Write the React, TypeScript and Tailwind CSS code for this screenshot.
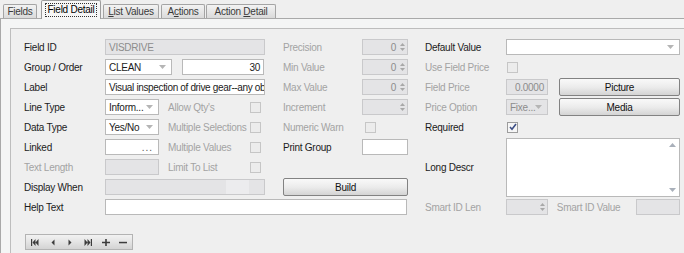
import type { ReactNode } from "react";

const font = { fontFamily: '"Liberation Sans", Arial, sans-serif' };

function Label({ children, off, className = "" }: { children: ReactNode; off?: boolean; className?: string }) {
  return (
    <div className={`flex items-center whitespace-nowrap ${off ? "text-[#a3a3a3]" : "text-[#1b1b1b]"} ${className}`}>
      {children}
    </div>
  );
}

function Arrow({ off }: { off?: boolean }) {
  return (
    <svg width="7" height="4" viewBox="0 0 7 4" className="shrink-0">
      <path d="M0 0h7L3.5 4z" fill={off ? "#b5b5b5" : "#8a8a8a"} />
    </svg>
  );
}

function Box({ w, off, children, className = "" }: { w?: string; off?: boolean; children?: ReactNode; className?: string }) {
  return (
    <div
      className={`h-4 border flex items-center overflow-hidden whitespace-nowrap ${
        off ? "bg-[#e4e4e6] border-[#c9c9cb] text-[#8c8c8c]" : "bg-white border-[#b9b9b9] text-[#1b1b1b]"
      } ${w ?? ""} ${className}`}
    >
      {children}
    </div>
  );
}

function Combo({ w, text, off }: { w: string; text: string; off?: boolean }) {
  return (
    <Box w={w} off={off} className="pl-[3px] pr-[5px] justify-between">
      <span>{text}</span>
      <Arrow off />
    </Box>
  );
}

function Spin({ w = "w-[46px]", value }: { w?: string; value?: string }) {
  return (
    <Box w={w} off className="justify-end pr-[2px]">
      <span className="mr-[4px]">{value}</span>
      <div className="flex flex-col items-center gap-[2px]">
        <svg width="5" height="3" viewBox="0 0 5 3">
          <path d="M0 3h5L2.5 0z" fill="#a8a8a8" />
        </svg>
        <svg width="5" height="3" viewBox="0 0 5 3">
          <path d="M0 0h5L2.5 3z" fill="#a8a8a8" />
        </svg>
      </div>
    </Box>
  );
}

function Check({ on, off }: { on?: boolean; off?: boolean }) {
  return (
    <div
      className={`w-[11px] h-[11px] border flex items-center justify-center ${
        off ? "border-[#c6c6c6] bg-[#ececec]" : "border-[#9c9c9c] bg-[#f6f6f6]"
      }`}
    >
      {on && (
        <svg width="8" height="8" viewBox="0 0 8 8">
          <path d="M1 4l2 2.2L7 1" stroke="#3d4f86" strokeWidth="1.6" fill="none" />
        </svg>
      )}
    </div>
  );
}

function Btn({ children, w }: { children: ReactNode; w: string }) {
  return (
    <div
      className={`h-[18px] ${w} border border-[#828282] rounded-[2px] bg-gradient-to-b from-[#f9f9f9] via-[#ececec] to-[#d4d4d4] flex items-center justify-center text-[#111]`}
    >
      {children}
    </div>
  );
}

function Tab({ children, w, active, className = "" }: { children: ReactNode; w: string; active?: boolean; className?: string }) {
  if (active) {
    return (
      <div className={`${w} h-[19px] -mb-px relative z-10 border border-b-0 border-[#9c9c9c] rounded-t-[2px] bg-[#f6f6f6] flex items-center justify-center ${className}`}>
        <span className="border border-dotted border-[#333] px-[1px] leading-[12px]">{children}</span>
      </div>
    );
  }
  return (
    <div
      className={`${w} h-[14px] border border-b-0 border-[#a4a4a4] rounded-t-[2px] bg-gradient-to-b from-[#f3f3f3] to-[#dadada] flex items-center justify-center text-[#3a3a3a] ${className}`}
    >
      {children}
    </div>
  );
}

function NavIcon({ kind }: { kind: string }) {
  const c = "#3c3c3c";
  return (
    <div className="w-[18px] h-full flex items-center justify-center">
      <svg width="8" height="7" viewBox="0 0 8 7">
        {kind === "first" && (
          <>
            <rect x="0" y="0" width="1.2" height="7" fill={c} />
            <path d="M1.5 3.5L4.5 0v7zM4.5 3.5L7.5 0v7z" fill={c} />
          </>
        )}
        {kind === "prev" && <path d="M2.5 3.5L5.5 0.5v6z" fill={c} />}
        {kind === "next" && <path d="M5.5 3.5L2.5 0.5v6z" fill={c} />}
        {kind === "last" && (
          <>
            <path d="M0.5 0v7l3-3.5zM3.5 0v7l3-3.5z" fill={c} />
            <rect x="6.8" y="0" width="1.2" height="7" fill={c} />
          </>
        )}
        {kind === "add" && <path d="M3.2 0h1.6v2.7H8v1.6H4.8V7H3.2V4.3H0V2.7h3.2z" fill={c} />}
        {kind === "del" && <rect x="0" y="2.8" width="8" height="1.5" fill={c} />}
      </svg>
    </div>
  );
}

export default function App() {
  return (
    <div style={font} className="w-[684px] h-[253px] overflow-hidden bg-[#efefef] text-[10px] tracking-[-0.25px]">
      {/* tabs */}
      <div className="h-[18px] flex items-end pl-[3px] relative">
        <Tab w="w-[34px]">Fields</Tab>
        <Tab w="w-[60px]" active className="ml-[4px]">
          Field Detail
        </Tab>
        <Tab w="w-[56px]" className="ml-[2px]">
          <span>
            <u>L</u>ist Values
          </span>
        </Tab>
        <Tab w="w-[44px]" className="ml-[2px]">
          <span>
            A<u>c</u>tions
          </span>
        </Tab>
        <Tab w="w-[70px]" className="ml-[1px]">
          <span>
            Action <u>D</u>etail
          </span>
        </Tab>
      </div>

      {/* page */}
      <div className="border-t border-l border-[#a9a9a9] bg-[#f4f5f5] pt-[9px] pl-[9px] h-[236px]">
        <div className="border-t border-l border-[#bdbdbd] bg-[#efefef] h-full pt-[8px] pl-[13px]">
          <div className="grid grid-cols-[81px_160px_18px_79px_46px_17px_81px_174px] grid-rows-[repeat(9,20px)] items-center">
            {/* row 1 */}
            <Label>Field ID</Label>
            <Box off className="pl-[3px] text-[#3a3a3a]">
              VISDRIVE
            </Box>
            <div />
            <Label off>Precision</Label>
            <Spin value="0" />
            <div />
            <Label>Default Value</Label>
            <Combo w="w-[174px]" text="" />

            {/* row 2 */}
            <Label>Group / Order</Label>
            <div className="flex items-center">
              <Combo w="w-[67px]" text="CLEAN" />
              <Box w="w-[82px] ml-[10px]" className="justify-end pr-[3px]">
                30
              </Box>
            </div>
            <div />
            <Label off>Min Value</Label>
            <Spin value="0" />
            <div />
            <Label off>Use Field Price</Label>
            <div className="pl-[1px]">
              <Check off />
            </div>

            {/* row 3 */}
            <Label>Label</Label>
            <Box className="pl-[3px] tracking-[-0.35px]">Visual inspection of drive gear--any ob</Box>
            <div />
            <Label off>Max Value</Label>
            <Spin value="0" />
            <div />
            <Label off>Field Price</Label>
            <div className="flex items-center">
              <Box w="w-[42px]" off className="justify-end pr-[3px]">
                0.0000
              </Box>
              <div className="ml-[11px]">
                <Btn w="w-[121px]">Picture</Btn>
              </div>
            </div>

            {/* row 4 */}
            <Label>Line Type</Label>
            <div className="flex items-center">
              <Combo w="w-[54px]" text="Inform..." />
              <Label off className="ml-[9px] w-[82px]">
                Allow Qty's
              </Label>
              <Check off />
            </div>
            <div />
            <Label off>Increment</Label>
            <Spin />
            <div />
            <Label off>Price Option</Label>
            <div className="flex items-center">
              <Combo w="w-[42px]" text="Fixe..." off />
              <div className="ml-[11px]">
                <Btn w="w-[121px]">Media</Btn>
              </div>
            </div>

            {/* row 5 */}
            <Label>Data Type</Label>
            <div className="flex items-center">
              <Combo w="w-[54px]" text="Yes/No" />
              <Label off className="ml-[9px] w-[82px]">
                Multiple Selections
              </Label>
              <Check off />
            </div>
            <div />
            <Label off>Numeric Warn</Label>
            <div className="pl-[3px]">
              <Check off />
            </div>
            <div />
            <Label>Required</Label>
            <div className="pl-[1px]">
              <Check on />
            </div>

            {/* row 6 */}
            <Label>Linked</Label>
            <div className="flex items-center">
              <Box w="w-[54px]" className="justify-end pr-[5px] text-[#555] tracking-[1px]">
                ...
              </Box>
              <Label off className="ml-[9px] w-[82px]">
                Multiple Values
              </Label>
              <Check off />
            </div>
            <div />
            <Label>Print Group</Label>
            <Box />
            <div />
            <Label className="row-span-3">Long Descr</Label>
            <div className="row-span-3 self-start mt-[1px] h-[59px] border border-[#b9b9b9] bg-white flex justify-end">
              <div className="w-[14px] flex flex-col items-center justify-between py-[4px]">
                <svg width="7" height="4" viewBox="0 0 7 4">
                  <path d="M0 4h7L3.5 0z" fill="#a9b0ba" />
                </svg>
                <svg width="7" height="4" viewBox="0 0 7 4">
                  <path d="M0 0h7L3.5 4z" fill="#a9b0ba" />
                </svg>
              </div>
            </div>

            {/* row 7 */}
            <Label off>Text Length</Label>
            <div className="flex items-center">
              <Box w="w-[54px]" off />
              <Label off className="ml-[9px] w-[82px]">
                Limit To List
              </Label>
              <Check off />
            </div>
            <div />
            <div />
            <div />
            <div />

            {/* row 8 */}
            <Label>Display When</Label>
            <Box off className="justify-end pr-[15px]">
              <div className="w-[23px] h-full bg-[#ececee]" />
            </Box>
            <div />
            <div className="col-span-2">
              <Btn w="w-[125px]">Build</Btn>
            </div>
            <div />

            {/* row 9 */}
            <Label>Help Text</Label>
            <div className="col-span-4 pr-[1px]">
              <Box />
            </div>
            <div />
            <Label off>Smart ID Len</Label>
            <div className="flex items-center">
              <Spin w="w-[42px]" />
              <Label off className="ml-[9px] w-[80px]">
                Smart ID Value
              </Label>
              <Box w="w-[44px]" off />
            </div>
          </div>

          {/* navigator */}
          <div className="mt-[17px] ml-[1px] w-[108px] h-[16px] border border-[#b3b3b3] bg-gradient-to-b from-[#f2f2f2] via-[#e4e4e4] to-[#d3d3d3] flex">
            <NavIcon kind="first" />
            <NavIcon kind="prev" />
            <NavIcon kind="next" />
            <NavIcon kind="last" />
            <NavIcon kind="add" />
            <NavIcon kind="del" />
          </div>
        </div>
      </div>
    </div>
  );
}
